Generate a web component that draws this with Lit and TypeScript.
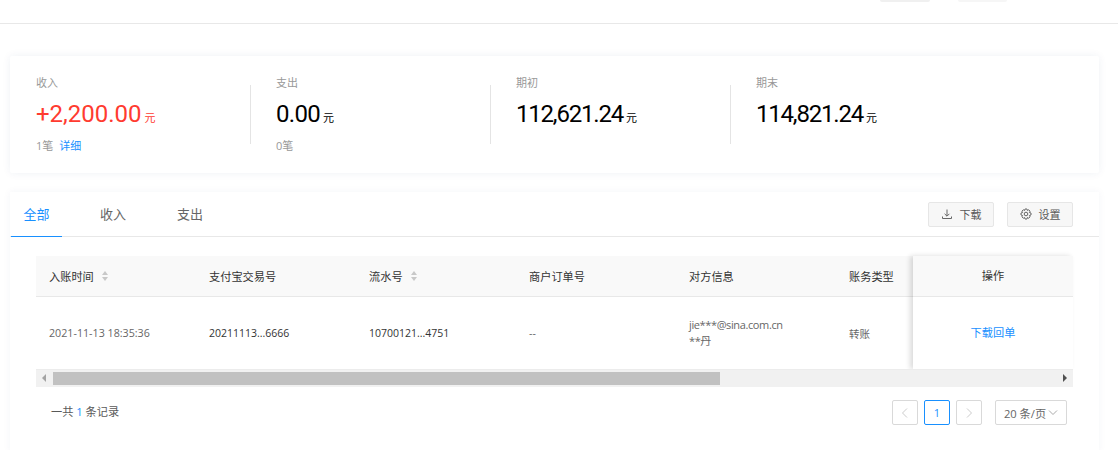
import { LitElement, html, css } from "lit";
import { customElement } from "lit/decorators.js";

@customElement("app-root")
export class AppRoot extends LitElement {
  static styles = css`
    :host { display: block; width: 1118px; height: 450px; overflow: hidden; background: #fff; font-family: "Open Sans", "Noto Sans CJK SC", sans-serif; font-size: 12px; color: #666; }
    * { box-sizing: border-box; }
    .top { height: 24px; border-bottom: 1px solid #e8e8e8; position: relative; }
    .ghost { position: absolute; top: 0; height: 2px; background: #f0f0f0; border-radius: 0 0 2px 2px; }
    .g1 { left: 880px; width: 50px; }
    .g2 { left: 958px; width: 49px; background: #f6f6f6; }
    .page { padding: 32px 19px 0 10px; }
    .summary { height: 117px; background: #fff; box-shadow: 0 0 8px rgba(30, 60, 120, .07); border-radius: 2px; padding: 20px 0 0 26px; display: flex; }
    .stat { width: 240px; position: relative; height: 80px; }
    .stat + .stat::before { content: ""; position: absolute; left: -26px; top: 9px; width: 1px; height: 59px; background: #e4e4e4; }
    .label { color: #999; font-size: 11px; line-height: 14px; }
    .value { margin-top: 7px; height: 34px; display: flex; align-items: baseline; color: #000; font-family: Roboto, sans-serif; font-size: 24px; font-weight: 400; line-height: 34px; white-space: nowrap; }
    .value.red { color: #ff3b30; }
    .unit { font-family: "Noto Sans CJK SC", sans-serif; font-size: 11px; font-weight: 400; letter-spacing: 0; margin-left: 3px; }
    .sub { margin-top: 7px; color: #999; font-size: 11px; line-height: 16px; display: flex; gap: 6px; }
    .sub a { color: #1890ff; }
    .panel { margin-top: 19px; background: #fff; box-shadow: 0 0 8px rgba(30, 60, 120, .05); height: 260px; }
    .tabbar { height: 45px; border-bottom: 1px solid #e8e8e8; display: flex; align-items: flex-start; padding: 10px 26px 0 1px; }
    .tab { font-size: 13px; line-height: 24px; height: 35px; width: 51px; text-align: center; color: #666; margin-right: 24px; }
    .tab.on { color: #1890ff; border-bottom: 1px solid #1890ff; }
    .tab.plain { width: 54px; margin-right: 23px; }
    .spacer { flex: 1; }
    .btn { width: 66px; height: 25px; background: #f7f7f7; border: 1px solid #e6e6e6; border-radius: 2px; padding-bottom: 1px; display: flex; align-items: center; justify-content: center; gap: 7px; font-size: 11px; color: #595959; margin-left: 13px; }
    .btn svg { display: block; }
    .wrap { margin: 19px 26px 0 26px; position: relative; height: 131px; }
    .head, .row { display: grid; grid-template-columns: repeat(6, 160px); }
    .head { height: 41px; background: #f9f9f9; border-bottom: 1px solid #e8e8e8; color: #333; font-size: 11.2px; align-items: center; padding-bottom: 1px; }
    .row { height: 72px; align-items: center; font-size: 10.5px; color: #333; }
    .cell { padding-left: 13px; white-space: nowrap; display: flex; align-items: center; }
    .muted { color: #666; }
    .date { font-size: 10.7px; }
    .two { display: block; line-height: 16px; font-size: 11px; letter-spacing: -0.38px; color: #666; }
    .sort { margin-left: 7px; display: block; }
    .fixed { position: absolute; top: 0; right: 0; width: 160px; height: 113px; background: #fff; box-shadow: -3px 0 5px rgba(0, 0, 0, .14); text-align: center; }
    .fixed .fh { height: 41px; line-height: 39px; background: #f9f9f9; border-bottom: 1px solid #e8e8e8; color: #333; font-size: 11.2px; }
    .fixed .fb { height: 72px; line-height: 72px; color: #1890ff; font-size: 11.2px; }
    .scroll { height: 18px; background: #f1f1f1; border-top: 1px solid #ececec; position: relative; }
    .thumb { position: absolute; left: 17px; top: 2px; width: 667px; height: 13px; background: #c1c1c1; }
    .arrow { position: absolute; top: 4px; width: 0; height: 0; border-top: 4px solid transparent; border-bottom: 4px solid transparent; }
    .arrow.l { left: 6px; border-right: 4px solid #a3a3a3; }
    .arrow.r { right: 6px; border-left: 4px solid #505050; }
    .foot { margin: 13px 32px 0 41px; display: flex; align-items: center; height: 25px; color: #595959; font-size: 11.2px; }
    .total { padding-bottom: 3px; }
    .foot b { font-weight: 400; color: #1890ff; }
    .pg { width: 26px; height: 25px; border: 1px solid #d9d9d9; border-radius: 2px; margin-left: 6px; display: flex; align-items: center; justify-content: center; color: #1890ff; font-size: 11px; }
    .pg.on { border-color: #1890ff; }
    .sel { width: 72px; height: 25px; border: 1px solid #d9d9d9; border-radius: 2px; margin-left: 13px; display: flex; align-items: center; justify-content: center; gap: 2px; color: #666; font-size: 11.2px; white-space: nowrap; }
  `;

  private sort() {
    return html`<svg class="sort" width="8" height="12" viewBox="0 0 8 12"><path d="M4 1 7 5H1zM4 11 1 7H7z" fill="#c8c8c8"/></svg>`;
  }

  private stat(label: string, value: string, red: boolean, spacing: number, sub: unknown) {
    return html`<div class="stat">
      <div class="label">${label}</div>
      <div class="value ${red ? "red" : ""}"><span style="letter-spacing:${spacing}px">${value}</span><span class="unit">元</span></div>
      <div class="sub">${sub}</div>
    </div>`;
  }

  render() {
    return html`
      <div class="top"><div class="ghost g1"></div><div class="ghost g2"></div></div>
      <div class="page">
        <div class="summary">
          ${this.stat("收入", "+2,200.00", true, 0, html`<span>1笔</span><a>详细</a>`)}
          ${this.stat("支出", "0.00", false, -0.7, html`<span>0笔</span>`)}
          ${this.stat("期初", "112,621.24", false, -1.2, "")}
          ${this.stat("期末", "114,821.24", false, -1.2, "")}
        </div>
        <div class="panel">
          <div class="tabbar">
            <div class="tab on">全部</div>
            <div class="tab plain">收入</div>
            <div class="tab plain">支出</div>
            <div class="spacer"></div>
            <div class="btn">
              <svg width="12" height="12" viewBox="0 0 12 12" fill="none" stroke="#666" stroke-width="1"><path d="M6 1.5V8M3.6 5.8 6 8.2l2.4-2.4M1.5 8.5v2h9v-2"/></svg>
              <span>下载</span>
            </div>
            <div class="btn">
              <svg width="12" height="12" viewBox="0 0 12 12" fill="none" stroke="#666" stroke-width="1"><path d="M5 1h2l.4 1.5 1.3-.7 1.4 1.4-.7 1.3L11 5v2l-1.6.5.7 1.3-1.4 1.4-1.3-.7L7 11H5l-.4-1.5-1.3.7-1.4-1.4.7-1.3L1 7V5l1.6-.5-.7-1.3 1.4-1.4 1.3.7z"/><circle cx="6" cy="6" r="1.8"/></svg>
              <span>设置</span>
            </div>
          </div>
          <div class="wrap">
            <div class="head">
              <div class="cell">入账时间${this.sort()}</div>
              <div class="cell">支付宝交易号</div>
              <div class="cell">流水号${this.sort()}</div>
              <div class="cell">商户订单号</div>
              <div class="cell">对方信息</div>
              <div class="cell">账务类型</div>
            </div>
            <div class="row">
              <div class="cell muted date">2021-11-13 18:35:36</div>
              <div class="cell">20211113...6666</div>
              <div class="cell">10700121...4751</div>
              <div class="cell muted">--</div>
              <div class="cell"><div class="two">jie***@sina.com.cn<br />**丹</div></div>
              <div class="cell muted">转账</div>
            </div>
            <div class="fixed">
              <div class="fh">操作</div>
              <div class="fb">下载回单</div>
            </div>
            <div class="scroll">
              <div class="arrow l"></div>
              <div class="thumb"></div>
              <div class="arrow r"></div>
            </div>
          </div>
          <div class="foot">
            <span class="total">一共 <b>1</b> 条记录</span>
            <div class="spacer"></div>
            <div class="pg"><svg width="10" height="12" viewBox="0 0 10 12" fill="none" stroke="#ccc"><path d="M7 1.5 2.5 6 7 10.5"/></svg></div>
            <div class="pg on">1</div>
            <div class="pg"><svg width="10" height="12" viewBox="0 0 10 12" fill="none" stroke="#ccc"><path d="M3 1.5 7.5 6 3 10.5"/></svg></div>
            <div class="sel">20 条/页<svg width="10" height="8" viewBox="0 0 10 8" fill="none" stroke="#aaa"><path d="M1 1.5 5 5.5 9 1.5"/></svg></div>
          </div>
        </div>
      </div>
    `;
  }
}
